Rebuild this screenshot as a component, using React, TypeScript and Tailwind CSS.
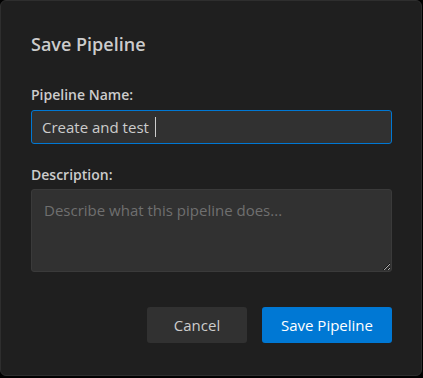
import { useState } from 'react'

export default function App() {
  const [desc, setDesc] = useState('')

  return (
    <div className="w-[423px] h-[378px] bg-black" style={{ fontFamily: '"Open Sans", "Noto Sans", sans-serif' }}>
      <div className="w-[422px] h-[376px] bg-[#1f1f1f] border border-[#2e2e2e] rounded-md px-[30px] pt-[31px] flex flex-col">
        <h2 className="text-[18px] leading-[24px] font-semibold text-[#cccccc]">Save Pipeline</h2>

        {/* Name */}
        <label className="mt-[29px] text-[14px] leading-[20px] font-semibold text-[#cccccc]">Pipeline Name:</label>
        <div className="mt-[5px] h-[34px] w-[361px] bg-[#313131] border border-[#0078d4] rounded-[3px] px-[10px] flex items-center text-[15px] text-[#cccccc]">
          <span className="whitespace-pre">Create and test </span>
          <span className="ml-[2px] w-px h-[20px] bg-[#cccccc]" />
        </div>

        {/* Description */}
        <label className="mt-[21px] text-[14px] leading-[20px] font-semibold text-[#cccccc]">Description:</label>
        <textarea
          value={desc}
          onChange={e => setDesc(e.target.value)}
          placeholder="Describe what this pipeline does..."
          className="mt-[4px] h-[83px] w-[361px] bg-[#313131] border border-[#3a3a3a] rounded-[3px] px-[12px] py-[9px] text-[15px] leading-[22px] text-[#cccccc] placeholder:text-[#6f6f6f] outline-none [color-scheme:dark]"
        />

        {/* Actions */}
        <div className="mt-[35px] -mr-px flex justify-end gap-[15px]">
          <button className="w-[100px] h-[36px] rounded-[3px] bg-[#313131] text-[15px] text-[#cccccc]">Cancel</button>
          <button className="w-[130px] h-[36px] rounded-[3px] bg-[#0078d4] text-[15px] text-white">Save Pipeline</button>
        </div>
      </div>
    </div>
  )
}
